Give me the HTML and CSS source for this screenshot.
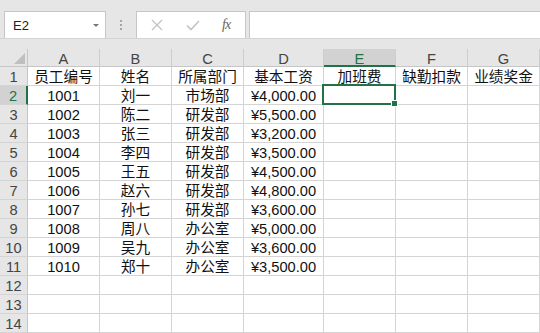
FILE: index.html
```html
<!DOCTYPE html>
<html lang="zh-CN">
<head>
  <meta charset="UTF-8">
  <title>工资表</title>
  <link rel="stylesheet" href="styles.css">
</head>
<body>

  <div class="formula-bar">
    <div class="name-box">
      <span>E2</span>
      <span class="drop"></span>
    </div>
    <div class="grip"><i></i><i></i><i></i></div>
    <div class="fx-buttons">
      <svg class="icon" width="12" height="12" viewBox="0 0 12 12">
        <path d="M1 1L11 11M11 1L1 11" stroke="#c4c4c4" stroke-width="1.4" fill="none"/>
      </svg>
      <svg class="icon" width="14" height="11" viewBox="0 0 14 11">
        <path d="M1 5.5L5 9.5L13 1" stroke="#c4c4c4" stroke-width="1.6" fill="none"/>
      </svg>
      <span class="fx">fx</span>
    </div>
    <div class="formula-input"></div>
  </div>

  <div class="sheet col-heads">
    <div class="corner"><span class="tri"></span></div>
    <div class="col-head">A</div>
    <div class="col-head">B</div>
    <div class="col-head">C</div>
    <div class="col-head">D</div>
    <div class="col-head active">E</div>
    <div class="col-head">F</div>
    <div class="col-head">G</div>
  </div>

  <div class="sheet" id="rows"></div>

  <script>
    const data = [
      ['员工编号', '姓名', '所属部门', '基本工资', '加班费', '缺勤扣款', '业绩奖金'],
      ['1001', '刘一', '市场部', '¥4,000.00'],
      ['1002', '陈二', '研发部', '¥5,500.00'],
      ['1003', '张三', '研发部', '¥3,200.00'],
      ['1004', '李四', '研发部', '¥3,500.00'],
      ['1005', '王五', '研发部', '¥4,500.00'],
      ['1006', '赵六', '研发部', '¥4,800.00'],
      ['1007', '孙七', '研发部', '¥3,600.00'],
      ['1008', '周八', '办公室', '¥5,000.00'],
      ['1009', '吴九', '办公室', '¥3,600.00'],
      ['1010', '郑十', '办公室', '¥3,500.00']
    ];

    const rows = document.getElementById('rows');
    let html = '';
    for (let r = 0; r < 14; r++) {
      const row = data[r] || [];
      html += `<div class="row-head${r === 1 ? ' active' : ''}">${r + 1}</div>`;
      for (let c = 0; c < 7; c++) {
        const selected = r === 1 && c === 4 ? ' selected' : '';
        html += `<div class="cell${selected}">${row[c] || ''}</div>`;
      }
    }
    rows.innerHTML = html;
  </script>

</body>
</html>
```

FILE: styles.css
```css
body {
  margin: 0;
  background-color: #e6e6e6;
  font-family: "Liberation Sans", "Noto Sans CJK SC", sans-serif;
  overflow: hidden;
}

.formula-bar {
  display: flex;
  height: 27px;
  padding-top: 11px;
  border-top: 2px solid #f1f1f1;
  margin-top: -2px;
  border-bottom: 1px solid #d4d4d4;
}

.name-box,
.fx-buttons,
.formula-input {
  background-color: #fff;
  border: 1px solid #c6c6c6;
  border-bottom: none;
  box-sizing: border-box;
  height: 27px;
}

.name-box {
  width: 102px;
  margin-left: 4px;
  display: flex;
  align-items: center;
  justify-content: space-between;
  padding: 0 6px 0 8px;
  font-size: 13px;
  color: #222;
}

.drop {
  width: 0;
  height: 0;
  border-left: 3.5px solid transparent;
  border-right: 3.5px solid transparent;
  border-top: 3.5px solid #777;
  margin-top: 1px;
}

.grip {
  width: 30px;
  display: flex;
  flex-direction: column;
  align-items: center;
  justify-content: center;
  gap: 2px;
}

.grip i {
  width: 2px;
  height: 2px;
  background-color: #a6a6a6;
}

.fx-buttons {
  width: 110px;
  display: flex;
  align-items: center;
  padding-left: 14px;
}

.fx-buttons .icon:nth-child(2) {
  margin-left: 23px;
}

.fx {
  margin-left: 22px;
  font-family: "Liberation Serif", serif;
  font-style: italic;
  font-size: 14px;
  color: #666;
  letter-spacing: -1px;
}

.formula-input {
  flex: 1;
  margin-left: 3px;
  border-right: none;
}

.sheet {
  display: grid;
  grid-template-columns: 28px 72px 72px 72px 80px 72px 72px 72px;
  font-size: 14.67px;
}

.col-heads {
  margin-top: 10px;
}

.corner,
.col-head,
.row-head {
  background-color: #e6e6e6;
  color: #444;
  box-sizing: border-box;
}

.corner {
  height: 18px;
  border-right: 1px solid #c6c6c6;
  border-bottom: 1px solid #c6c6c6;
  position: relative;
}

.tri {
  position: absolute;
  right: 2px;
  bottom: 2px;
  width: 0;
  height: 0;
  border-left: 11px solid transparent;
  border-bottom: 11px solid #bfbfbf;
}

.col-head {
  height: 18px;
  line-height: 18px;
  text-align: center;
  border-right: 1px solid #cdcdcd;
  border-bottom: 1px solid #c6c6c6;
  padding-top: 1px;
}

.col-head.active {
  background-color: #d2d2d2;
  color: #217346;
  border-bottom: 2px solid #217346;
}

.row-head {
  height: 19px;
  line-height: 19px;
  text-align: center;
  border-right: 1px solid #c6c6c6;
  border-bottom: 1px solid #d4d4d4;
  padding-top: 1px;
}

.row-head.active {
  background-color: #d2d2d2;
  color: #217346;
  border-right: 2px solid #217346;
}

.cell {
  height: 19px;
  line-height: 19px;
  box-sizing: border-box;
  background-color: #fff;
  color: #111;
  text-align: center;
  white-space: nowrap;
  border-right: 1px solid #d4d4d4;
  border-bottom: 1px solid #d4d4d4;
  padding-top: 1px;
}

.cell.selected {
  position: relative;
}

.cell.selected::before {
  content: "";
  position: absolute;
  left: -2px;
  top: -2px;
  right: -1px;
  bottom: -1px;
  border: 2px solid #217346;
}

.cell.selected::after {
  content: "";
  position: absolute;
  right: -3px;
  bottom: -3px;
  width: 5px;
  height: 5px;
  background-color: #217346;
  border: 1px solid #fff;
}
```
